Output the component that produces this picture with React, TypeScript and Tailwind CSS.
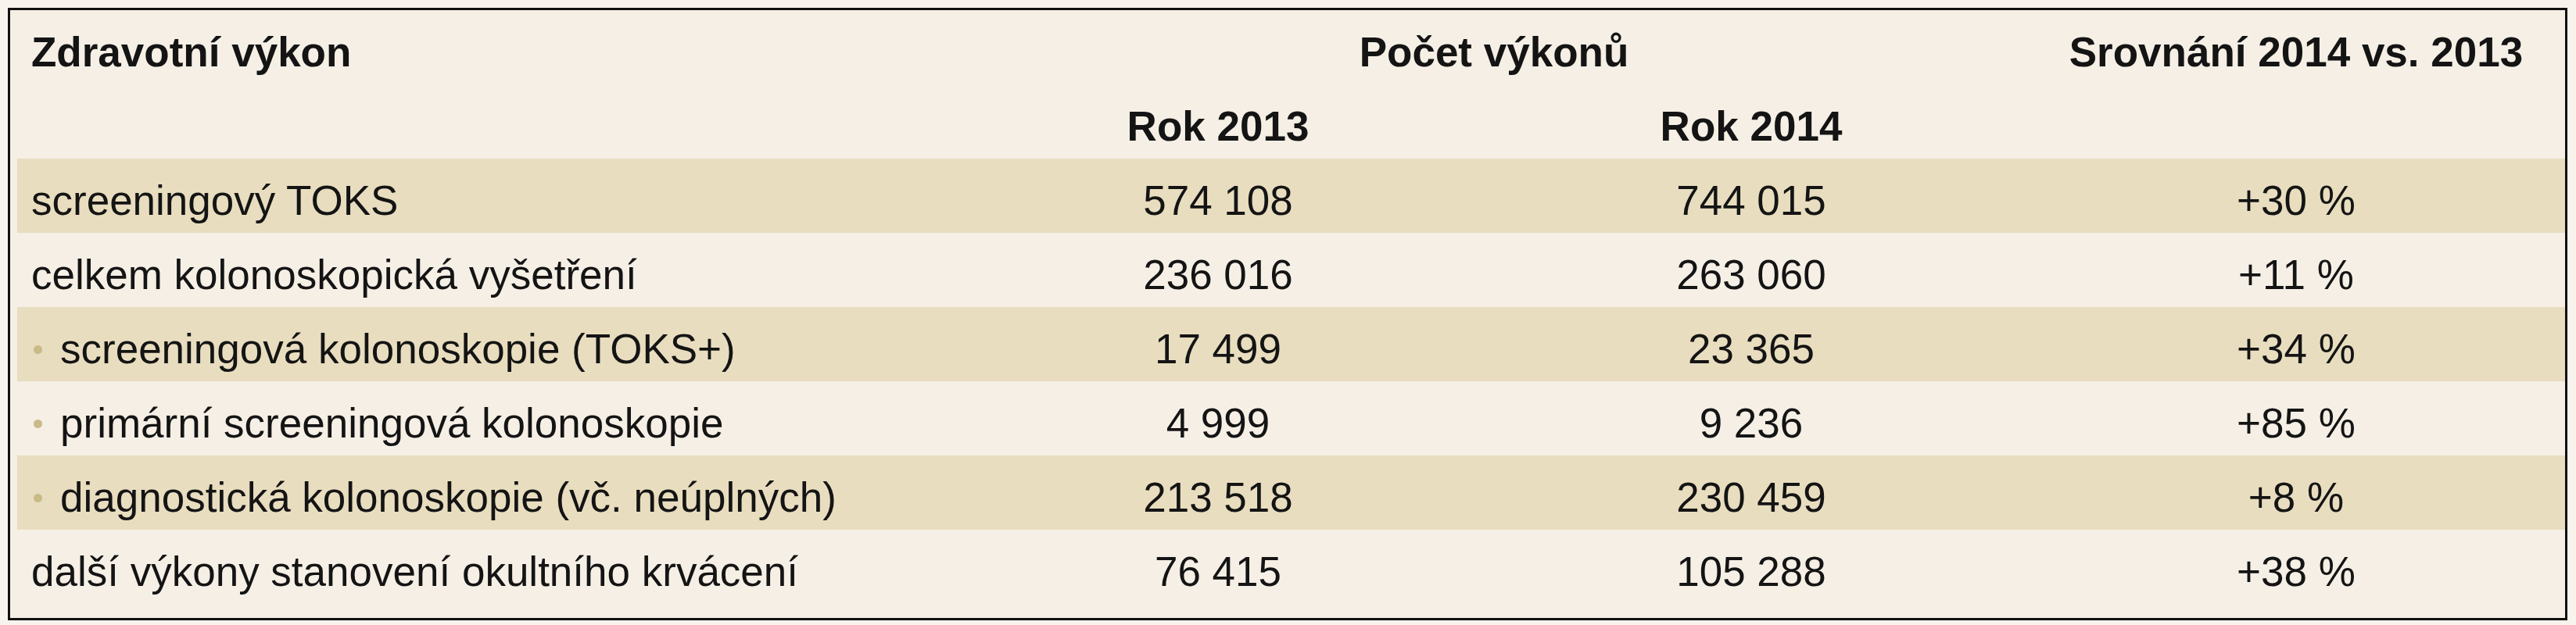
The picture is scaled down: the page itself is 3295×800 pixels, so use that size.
const rows = [
  { label: 'screeningový TOKS', y2013: '574 108', y2014: '744 015', diff: '+30 %', sub: false },
  { label: 'celkem kolonoskopická vyšetření', y2013: '236 016', y2014: '263 060', diff: '+11 %', sub: false },
  { label: 'screeningová kolonoskopie (TOKS+)', y2013: '17 499', y2014: '23 365', diff: '+34 %', sub: true },
  { label: 'primární screeningová kolonoskopie', y2013: '4 999', y2014: '9 236', diff: '+85 %', sub: true },
  { label: 'diagnostická kolonoskopie (vč. neúplných)', y2013: '213 518', y2014: '230 459', diff: '+8 %', sub: true },
  { label: 'další výkony stanovení okultního krvácení', y2013: '76 415', y2014: '105 288', diff: '+38 %', sub: false },
];

export default function App() {
  return (
    <div
      className="w-[3295px] h-[800px] bg-[#f8f4ed] pt-[10px] pl-[10px] text-[#141414]"
      style={{ fontFamily: '"Liberation Sans", Arial, sans-serif' }}
    >
      <div className="w-[3274px] h-[784px] border-[3px] border-[#111] bg-[#f5efe5] text-[53px] leading-none">
        {/* Header */}
        <div className="grid grid-cols-[1216px_1364px_688px] h-[95px] pt-3 items-center font-bold">
          <div className="pl-[27px]">Zdravotní výkon</div>
          <div className="text-center">Počet výkonů</div>
          <div className="text-center">Srovnání 2014 vs. 2013</div>
        </div>
        <div className="grid grid-cols-[1216px_658px_706px_688px] h-[95px] pt-3 items-center font-bold">
          <div />
          <div className="text-center">Rok 2013</div>
          <div className="text-center">Rok 2014</div>
          <div />
        </div>

        {/* Body */}
        {rows.map((r, i) => (
          <div
            key={r.label}
            className={
              i % 2 === 0
                ? 'ml-[9px] grid grid-cols-[1207px_658px_706px_688px] h-[95px] pt-3 items-center bg-[#e8ddbf]'
                : 'ml-[9px] grid grid-cols-[1207px_658px_706px_688px] h-[95px] pt-3 items-center'
            }
          >
            <div className="flex items-center pl-[18px] whitespace-nowrap">
              {r.sub && (
                <span className="shrink-0 w-[11px] h-[11px] rounded-full bg-[#c9ba89] ml-[3px] mr-[23px] mt-[2px]" />
              )}
              <span>{r.label}</span>
            </div>
            <div className="text-center">{r.y2013}</div>
            <div className="text-center">{r.y2014}</div>
            <div className="text-center">{r.diff}</div>
          </div>
        ))}
      </div>
    </div>
  );
}
